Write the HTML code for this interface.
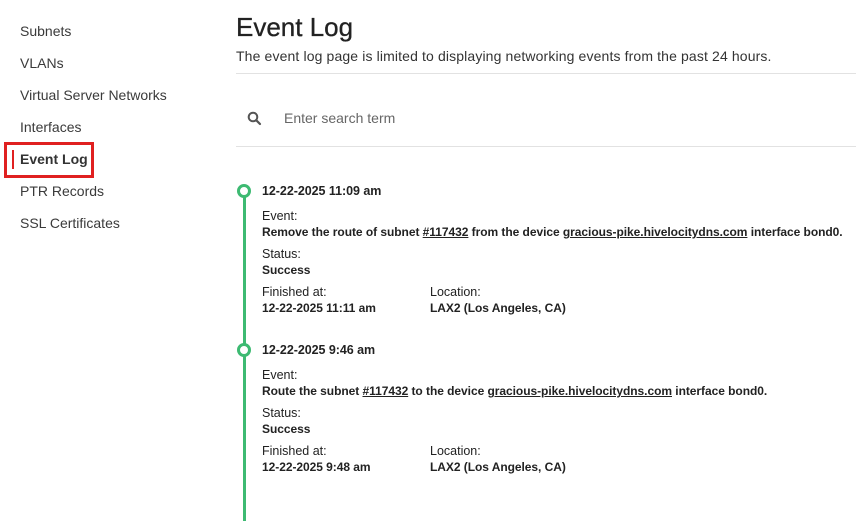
<!DOCTYPE html>
<html><head><meta charset="utf-8"><style>
*{margin:0;padding:0;box-sizing:border-box}
body{width:856px;height:521px;overflow:hidden;background:#fff;font-family:"Liberation Sans",sans-serif;color:#222;position:relative}
.a{position:absolute;white-space:nowrap}
.nav{left:20px;font-size:14px;color:#3a3a3a;line-height:16px}
.l{font-size:12.5px;color:#222;line-height:14px;left:262px}
.b{font-weight:bold;font-size:12px;letter-spacing:-0.05px}
u{text-decoration:underline}
.dot{position:absolute;left:237px;width:14px;height:14px;border:3.5px solid #3dba72;border-radius:50%;background:#fff}
</style></head><body>
<div class="a nav" style="top:23px">Subnets</div>
<div class="a nav" style="top:55px">VLANs</div>
<div class="a nav" style="top:87px">Virtual Server Networks</div>
<div class="a nav" style="top:119px">Interfaces</div>
<div class="a" style="left:4px;top:142px;width:90px;height:36px;border:3px solid #e02020"></div>
<div class="a" style="left:12px;top:150px;width:2px;height:19px;background:#e02020"></div>
<div class="a nav" style="top:151px;font-weight:bold;color:#333">Event Log</div>
<div class="a nav" style="top:183px">PTR Records</div>
<div class="a nav" style="top:215px">SSL Certificates</div>

<div class="a" style="left:236px;top:12px;font-size:26px;color:#222;line-height:30px;-webkit-text-stroke:0.3px #222">Event Log</div>
<div class="a" style="left:236px;top:48px;font-size:14px;color:#333;line-height:16px;letter-spacing:0.13px">The event log page is limited to displaying networking events from the past 24 hours.</div>
<div class="a" style="left:236px;top:73px;width:620px;height:1px;background:#e2e2e2"></div>
<svg class="a" style="left:247px;top:111px" width="15" height="15" viewBox="0 0 15 15"><circle cx="6" cy="6" r="4.3" fill="none" stroke="#555" stroke-width="2"/><path d="M9.2 9.2L13 13" stroke="#555" stroke-width="2.2" stroke-linecap="round"/></svg>
<div class="a" style="left:284px;top:110px;font-size:14px;color:#666;line-height:16px">Enter search term</div>
<div class="a" style="left:236px;top:146px;width:620px;height:1px;background:#e2e2e2"></div>

<div class="a" style="left:242.5px;top:195px;width:3px;height:326px;background:#3dba72"></div>
<div class="dot" style="top:184px"></div>
<div class="a l b" style="top:184px;font-size:12.5px">12-22-2025 11:09 am</div>
<div class="a l" style="top:209px">Event:</div>
<div class="a l b" style="top:225px">Remove the route of subnet <u>#117432</u> from the device <u>gracious-pike.hivelocitydns.com</u> interface bond0.</div>
<div class="a l" style="top:247px">Status:</div>
<div class="a l b" style="top:263px">Success</div>
<div class="a l" style="top:285px">Finished at:</div>
<div class="a l b" style="top:301px">12-22-2025 11:11 am</div>
<div class="a l" style="top:285px;left:430px">Location:</div>
<div class="a l b" style="top:301px;left:430px">LAX2 (Los Angeles, CA)</div>

<div class="dot" style="top:343px"></div>
<div class="a l b" style="top:343px;font-size:12.5px">12-22-2025 9:46 am</div>
<div class="a l" style="top:368px">Event:</div>
<div class="a l b" style="top:384px">Route the subnet <u>#117432</u> to the device <u>gracious-pike.hivelocitydns.com</u> interface bond0.</div>
<div class="a l" style="top:406px">Status:</div>
<div class="a l b" style="top:422px">Success</div>
<div class="a l" style="top:444px">Finished at:</div>
<div class="a l b" style="top:460px">12-22-2025 9:48 am</div>
<div class="a l" style="top:444px;left:430px">Location:</div>
<div class="a l b" style="top:460px;left:430px">LAX2 (Los Angeles, CA)</div>
</body></html>
